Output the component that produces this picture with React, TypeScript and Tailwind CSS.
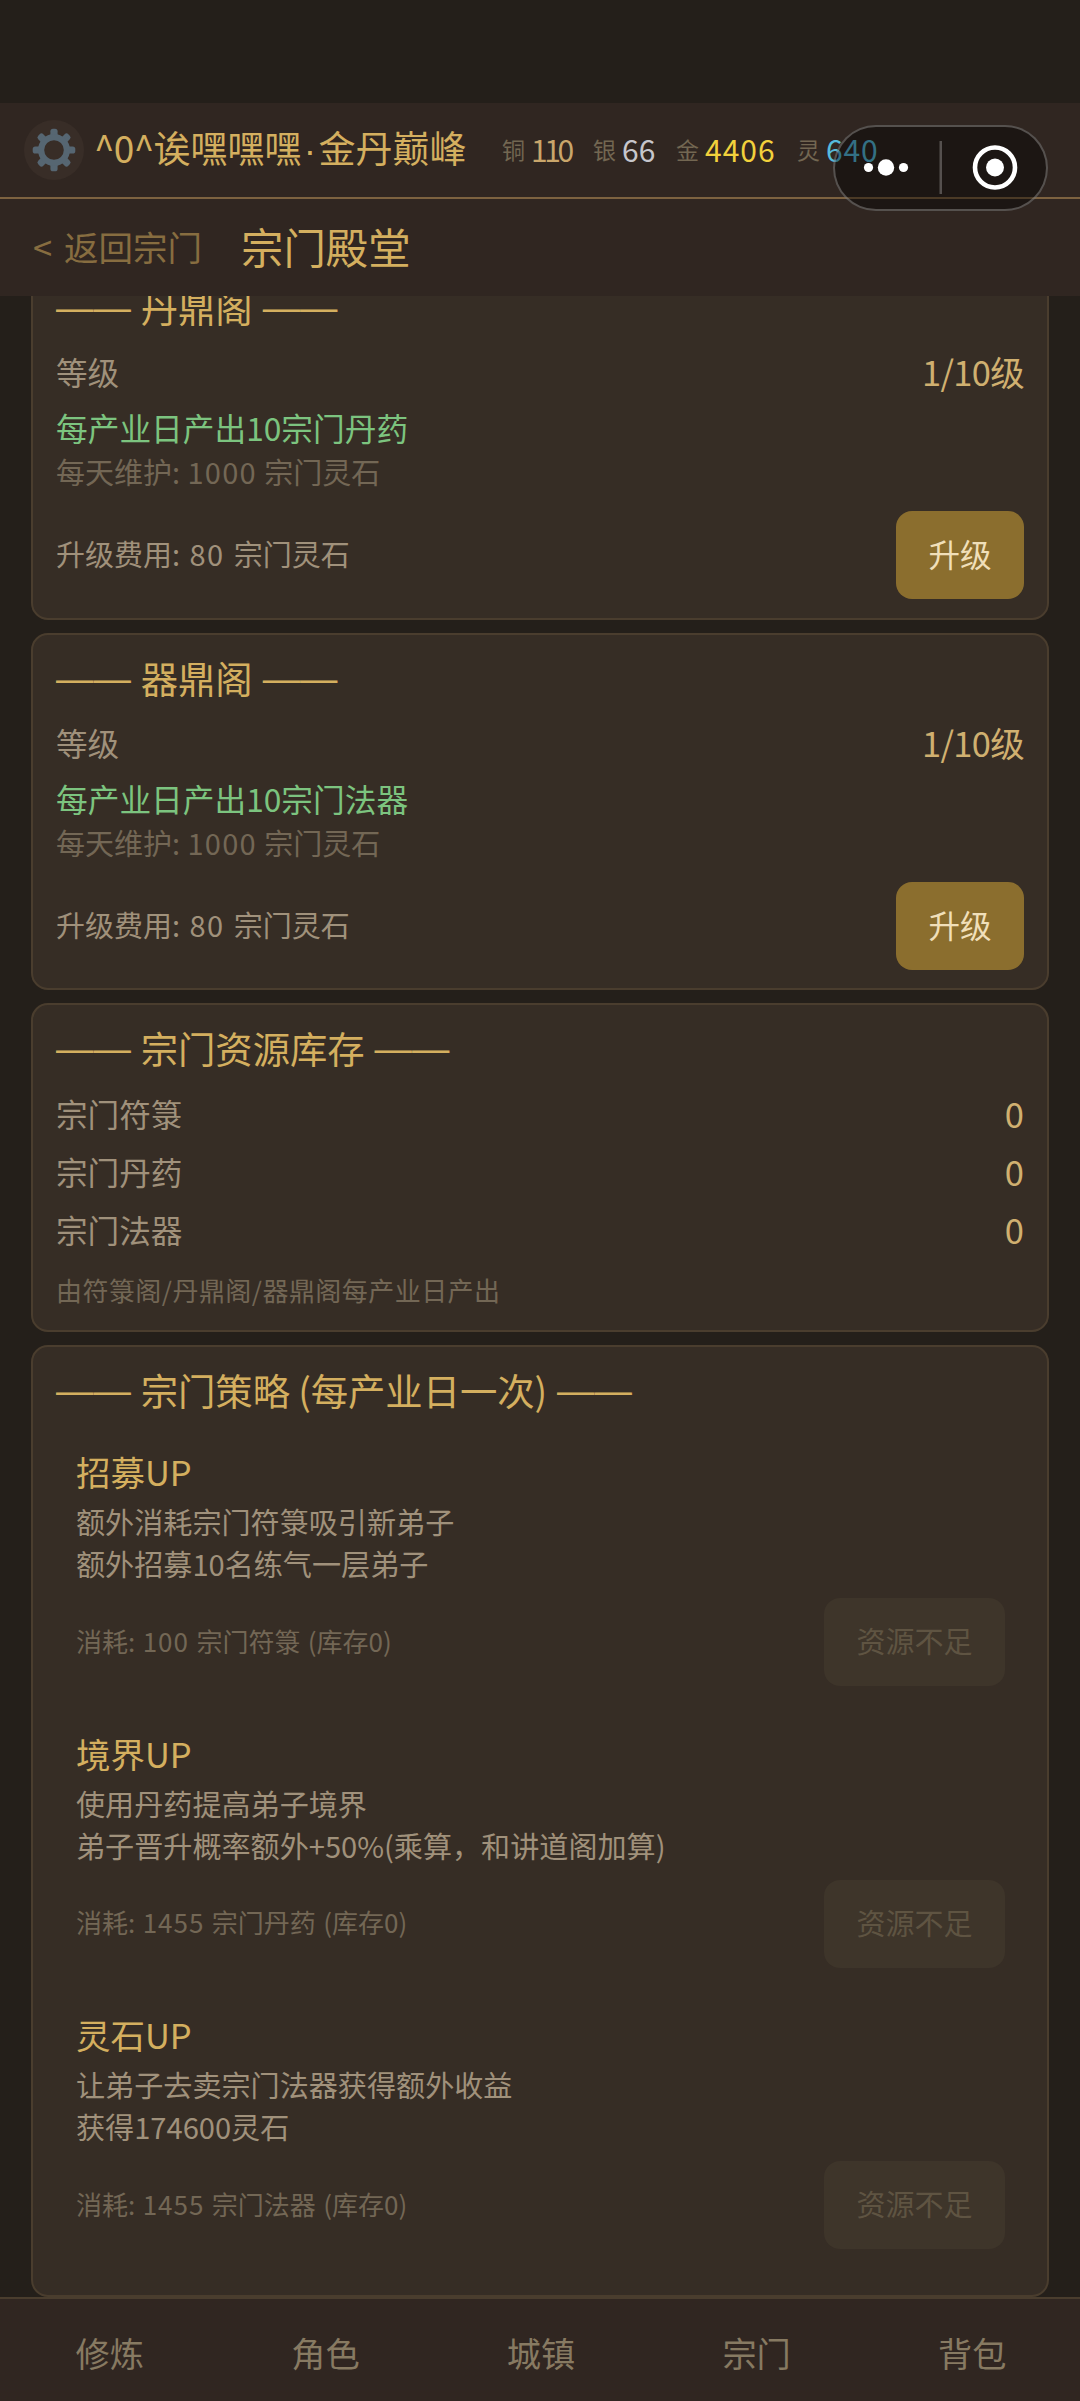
import React from "react";

const coins = [
    { label: "铜", value: "110", color: "text-[#c9a66b]", box: "w-[91px]", tight: "tracking-[-3.4px]" },
    { label: "银", value: "66", color: "text-[#c6c6cc]", box: "w-[83px]", tight: "" },
    { label: "金", value: "4406", color: "text-[#f2d13c]", box: "w-[121px]", tight: "tracking-[1px]" },
    { label: "灵", value: "640", color: "text-[#56bbdc]", box: "w-[90px]", tight: "tracking-[0.8px]" },
];

const halls = [
    { name: "丹鼎阁", product: "宗门丹药" },
    { name: "器鼎阁", product: "宗门法器" },
];

const stocks = ["宗门符箓", "宗门丹药", "宗门法器"];

const strategies = [
    {
        name: "招募UP",
        lines: ["额外消耗宗门符箓吸引新弟子", "额外招募10名练气一层弟子"],
        cost: 100,
        item: "宗门符箓",
    },
    {
        name: "境界UP",
        lines: ["使用丹药提高弟子境界", "弟子晋升概率额外+50%(乘算，和讲道阁加算)"],
        cost: 1455,
        item: "宗门丹药",
    },
    {
        name: "灵石UP",
        lines: ["让弟子去卖宗门法器获得额外收益", "获得174600灵石"],
        cost: 1455,
        item: "宗门法器",
    },
];

const tabs = ["修炼", "角色", "城镇", "宗门", "背包"];

function Card({ className = "", children }: { className?: string; children: React.ReactNode }) {
    return (
        <section className={`shrink-0 rounded-[17px] border-2 border-[#4a3d2e] bg-[#362d25] px-[23px] pt-[21px] ${className}`}>
            {children}
        </section>
    );
}

function CardTitle({ children }: { children: React.ReactNode }) {
    return (
        <h2 className="flex h-[50px] gap-[10px] text-[37.4px] leading-[45px] whitespace-nowrap text-[#d4af5f]">
            <span className="font-['Liberation_Sans']">——</span>
            <span className="tracking-[-0.1px]">{children}</span>
            <span className="font-['Liberation_Sans']">——</span>
        </h2>
    );
}

function GearIcon() {
    return (
        <svg width="44" height="44" viewBox="-22 -22 44 44">
            {[0, 45, 90, 135, 180, 225, 270, 315].map((deg) => (
                <rect key={deg} x="-3.6" y="-21.3" width="7.2" height="10" rx="2.6" fill="#566672" transform={`rotate(${deg})`} />
            ))}
            <circle r="12.9" fill="none" stroke="#566672" strokeWidth="6.2" />
        </svg>
    );
}

export default function App() {
    return (
        <div className="flex h-[2401px] w-[1080px] flex-col overflow-hidden bg-[#241f1a] font-['Noto_Sans_CJK_SC',sans-serif]">
            <div className="h-[103px] shrink-0" />

            {/* 顶栏 */}
            <header className="relative flex h-[96px] shrink-0 items-center border-b-2 border-[#7d6240] bg-[#302621] pl-6">
                <div className="flex h-[60px] w-[60px] items-center justify-center rounded-full bg-[#382d27]">
                    <GearIcon />
                </div>
                <div className="ml-[10px] w-[408px] pb-[2px] text-[37px] leading-[50px] whitespace-nowrap text-[#d4af5f]">
                    <span className="tracking-[-0.7px]">^0^</span>诶嘿嘿嘿
                    <span className="inline-block w-[17px] text-center font-['Liberation_Sans']">·</span>金丹巅峰
                </div>
                {coins.map((c) => (
                    <div key={c.label} className={`flex items-center pb-[2px] leading-[40px] whitespace-nowrap ${c.box}`}>
                        <span className="w-[29px] text-[23px] text-[#736752]">{c.label}</span>
                        <span className={`text-[30px] ${c.color} ${c.tight}`}>{c.value}</span>
                    </div>
                ))}
                {/* 小程序胶囊 */}
                <div className="absolute top-[22px] left-[833px] h-[86px] w-[215px] rounded-full border-2 border-white/25 bg-black/40">
                    <svg width="211" height="82" viewBox="0 0 211 82">
                        <circle cx="33.5" cy="40.5" r="4.6" fill="#fff" />
                        <circle cx="51" cy="40.5" r="8.2" fill="#fff" />
                        <circle cx="68.5" cy="40.5" r="4.6" fill="#fff" />
                        <rect x="104.5" y="14" width="2.5" height="53" fill="#fff" fillOpacity="0.25" />
                        <circle cx="160" cy="40.5" r="20" fill="none" stroke="#fff" strokeWidth="4.6" />
                        <circle cx="160" cy="40.5" r="9" fill="#fff" />
                    </svg>
                </div>
            </header>

            <div className="flex h-[97px] shrink-0 items-center bg-[#302621] pb-[4px] pl-[33px] whitespace-nowrap">
                <button className="w-[208px] text-left text-[34.5px] leading-[50px] text-[#876d40] [word-spacing:4px]">&lt; 返回宗门</button>
                <h1 className="text-[42.4px] leading-[60px] text-[#d4af5f]">宗门殿堂</h1>
            </div>

            <main className="flex min-h-0 flex-1 flex-col gap-[13px] overflow-hidden px-[31px]">
                {halls.map((hall, i) => (
                    <Card key={hall.name} className={i === 0 ? "-mt-[34px] h-[358px]" : "h-[357px]"}>
                        <CardTitle>{hall.name}</CardTitle>
                        <div className="mt-4 flex h-11 items-center justify-between pb-[2px]">
                            <span className="text-[31.6px] text-[#a0917b]">等级</span>
                            <span className="text-[34.5px] tracking-[-0.7px] text-[#d0b070]">1/10级</span>
                        </div>
                        <p className="mt-3 h-11 text-[31.7px] leading-[40px] text-[#7cc47f]">每产业日产出10{hall.product}</p>
                        <p className="h-11 text-[29px] leading-[40px] text-[#736755] [word-spacing:1px]">
                            每天维护: <span className="tracking-[1.2px]">1000</span> 宗门灵石
                        </p>
                        <div className="mt-4 flex items-center justify-between">
                            <span className="pb-[2px] text-[29px] text-[#a0917b] [word-spacing:3px]">
                                升级费用: <span className="tracking-[1.3px]">80</span> 宗门灵石
                            </span>
                            <button className="h-[88px] w-[128px] rounded-[16px] bg-[#8b6e2e] pb-[3px] text-[31.6px] text-[#f0dfb9]">升级</button>
                        </div>
                    </Card>
                ))}

                <Card className="h-[329px]">
                    <CardTitle>宗门资源库存</CardTitle>
                    <div className="mt-[10px]">
                        {stocks.map((s) => (
                            <div key={s} className="flex h-[58px] items-center justify-between pb-[2px]">
                                <span className="text-[31.6px] text-[#a0917b]">{s}</span>
                                <span className="text-[34.5px] text-[#d0b070]">0</span>
                            </div>
                        ))}
                    </div>
                    <p className="mt-[11px] text-[26px] leading-[37px] tracking-[0.45px] text-[#736755]">由符箓阁/丹鼎阁/器鼎阁每产业日产出</p>
                </Card>

                <Card className="h-[952px]">
                    <CardTitle>宗门策略 (每产业日一次)</CardTitle>
                    <div className="mt-[14px] flex flex-col gap-[6.5px] pr-[19px] pl-[20px]">
                        {strategies.map((s) => (
                            <div key={s.name} className="h-[275px] pt-[19px]">
                                <h3 className="h-11 text-[34.5px] leading-[40px] text-[#d4af5f]">{s.name}</h3>
                                <div className="mt-[5px] mb-[14px] text-[29.1px] leading-[42px] text-[#a0917b]">
                                    {s.lines.map((line) => (
                                        <p key={line} className="whitespace-nowrap">{line}</p>
                                    ))}
                                </div>
                                <div className="flex items-center justify-between">
                                    <span className="pb-[4px] text-[26px] text-[#736755] [word-spacing:1.6px]">
                                        消耗: <span className="tracking-[1px]">{s.cost}</span> {s.item} (库存0)
                                    </span>
                                    <button className="h-[88px] w-[181px] rounded-[16px] bg-[#3e352a] pb-[2px] text-[29px] text-[#5f5442]" disabled>
                                        资源不足
                                    </button>
                                </div>
                            </div>
                        ))}
                    </div>
                </Card>
            </main>

            {/* 底部导航 */}
            <nav className="grid h-[104px] shrink-0 grid-cols-5 border-t-2 border-[#4a3d2e] bg-[#302621] pt-[22px] pl-[2px]">
                {tabs.map((t) => (
                    <button key={t} className="h-[64px] text-[34.2px] text-[#877a62]">{t}</button>
                ))}
            </nav>
        </div>
    );
}
